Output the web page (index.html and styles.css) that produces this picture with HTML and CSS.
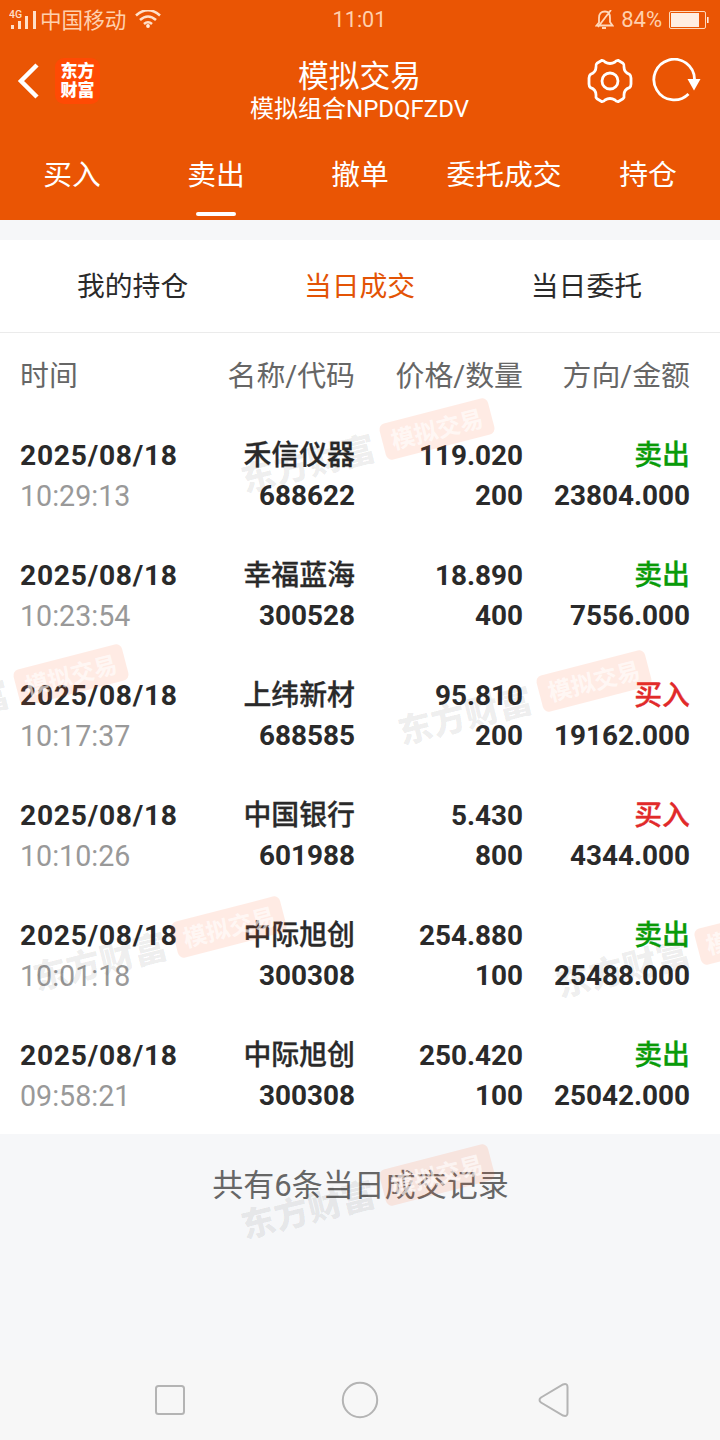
FILE: index.html
```html
<!DOCTYPE html>
<html lang="zh-CN">
<head>
    <meta charset="UTF-8">
    <meta name="viewport" content="width=device-width, initial-scale=1.0">
    <title>模拟交易</title>
    <link rel="stylesheet" href="styles.css">
</head>
<body>
    <div class="app">
        <header class="header">
            <div class="status-bar">
                <div class="status-left">
                    <svg class="signal" width="29" height="22" viewBox="0 0 29 22">
                        <text x="0" y="8.5">4G</text>
                        <path d="M3.5 16v4M10.5 12v8M17.5 7v13M25.5 2v18"/>
                    </svg>
                    <span class="carrier">中国移动</span>
                    <svg class="wifi" width="26" height="20" viewBox="0 0 26 20">
                        <path d="M1 5.5Q13 -5 25 5.5M5 10Q13 3 21 10M9 14Q13 10.5 17 14"/>
                        <circle cx="13" cy="16" r="1.9"/>
                    </svg>
                </div>
                <span class="clock">11:01</span>
                <div class="status-right">
                    <svg class="bell" width="19" height="20" viewBox="0 0 19 20">
                        <path d="M4 13V8Q4 1.500 10 1.500Q15 1.500 15 8V12L17.500 15.500H1.500L4 12.500M7 18H11M16 0L3 17"/>
                    </svg>
                    <span>84%</span>
                    <svg class="battery" width="40" height="18" viewBox="0 0 40 18">
                        <rect class="case" x=".5" y=".5" width="36" height="17" rx="1.5"/>
                        <rect class="level" x="2" y="2" width="28" height="14"/>
                        <rect class="level" x="38" y="6" width="1.6" height="6"/>
                    </svg>
                </div>
            </div>
            <div class="title-bar">
                <div class="title-left">
                    <svg class="back" width="24" height="38" viewBox="0 0 24 38">
                        <path d="M20 3L4 19L20 35"/>
                    </svg>
                    <div class="logo"><span>东方</span><span>财富</span></div>
                </div>
                <div class="title">
                    <h1>模拟交易</h1>
                    <p>模拟组合NPDQFZDV</p>
                </div>
                <div class="title-right">
                    <svg class="icon" width="46" height="46" viewBox="0 0 46 46">
                        <path d="M15 2.300Q17 2.500 18 4Q23 7 28 4Q29 2.500 31 2.300L36 5.200Q37.500 6.500 37 9Q37 14.500 42.500 16.300Q44 17.500 44 20V26Q44 28.500 42.500 29.700Q37 31.500 37 37Q37.500 39.500 36 40.800L31 43.700Q29 43.500 28 42Q23 39 18 42Q17 43.500 15 43.700L10 40.800Q8.500 39.500 9 37Q9 31.500 3.500 29.700Q2 28.500 2 26V20Q2 17.500 3.500 16.300Q9 14.500 9 9Q8.500 6.500 10 5.200Z"/>
                        <circle cx="23" cy="23" r="8"/>
                    </svg>
                    <svg class="icon" width="50" height="46" viewBox="0 0 50 46">
                        <path d="M42.500 21A20.300 20.300 0 1 0 36.500 36"/>
                        <path class="arrow" d="M35.500 21H48.500L42 32.500Z"/>
                    </svg>
                </div>
            </div>
            <nav class="tabs">
                <a>买入</a>
                <a class="active">卖出</a>
                <a>撤单</a>
                <a>委托成交</a>
                <a>持仓</a>
            </nav>
        </header>

        <nav class="sub-tabs">
            <a>我的持仓</a>
            <a class="active">当日成交</a>
            <a>当日委托</a>
        </nav>

        <main class="records">
            <div class="row head">
                <span>时间</span>
                <span>名称/代码</span>
                <span>价格/数量</span>
                <span>方向/金额</span>
            </div>
            <div class="row">
                <div class="date">2025/08/18<small>10:29:13</small></div>
                <div><span class="name">禾信仪器</span><br>688622</div>
                <div>119.020<br>200</div>
                <div><span class="sell">卖出</span><br>23804.000</div>
            </div>
            <div class="row">
                <div class="date">2025/08/18<small>10:23:54</small></div>
                <div><span class="name">幸福蓝海</span><br>300528</div>
                <div>18.890<br>400</div>
                <div><span class="sell">卖出</span><br>7556.000</div>
            </div>
            <div class="row">
                <div class="date">2025/08/18<small>10:17:37</small></div>
                <div><span class="name">上纬新材</span><br>688585</div>
                <div>95.810<br>200</div>
                <div><span class="buy">买入</span><br>19162.000</div>
            </div>
            <div class="row">
                <div class="date">2025/08/18<small>10:10:26</small></div>
                <div><span class="name">中国银行</span><br>601988</div>
                <div>5.430<br>800</div>
                <div><span class="buy">买入</span><br>4344.000</div>
            </div>
            <div class="row">
                <div class="date">2025/08/18<small>10:01:18</small></div>
                <div><span class="name">中际旭创</span><br>300308</div>
                <div>254.880<br>100</div>
                <div><span class="sell">卖出</span><br>25488.000</div>
            </div>
            <div class="row">
                <div class="date">2025/08/18<small>09:58:21</small></div>
                <div><span class="name">中际旭创</span><br>300308</div>
                <div>250.420<br>100</div>
                <div><span class="sell">卖出</span><br>25042.000</div>
            </div>
        </main>

        <p class="total">共有6条当日成交记录</p>

        <footer class="nav-bar">
            <svg width="32" height="32" viewBox="0 0 32 32"><rect x="2" y="2" width="28" height="28" rx="2.500"/></svg>
            <svg class="home" width="38" height="38" viewBox="0 0 38 38"><circle cx="19" cy="19" r="17.200"/></svg>
            <svg width="32" height="36" viewBox="0 0 32 36"><path d="M3 15.500L25 2.500Q29.500 1 29.500 5V31Q29.500 35 25 33.500L3 20.500Q0 18 3 15.500Z"/></svg>
        </footer>

        <!-- watermark, lies over the whole page -->
        <svg class="watermark" width="720" height="1440" viewBox="0 0 720 1440">
            <defs>
                <g id="mark">
                    <text class="wm-name" x="-202" y="15" textLength="137" transform="rotate(-14)">东方财富</text>
                    <g transform="rotate(-14.500)">
                        <rect x="-56" y="-18.500" width="112" height="37" rx="6"/>
                        <text class="wm-tag" x="-47" y="9" textLength="94">模拟交易</text>
                    </g>
                </g>
            </defs>
            <use href="#mark" x="437" y="429"/>
            <use href="#mark" x="71" y="675"/>
            <use href="#mark" x="594" y="681"/>
            <use href="#mark" x="229" y="927"/>
            <use href="#mark" x="752" y="934"/>
            <use href="#mark" x="437" y="1175"/>
        </svg>
    </div>
</body>
</html>
```
FILE: styles.css
```css
* {
    box-sizing: border-box;
}

body {
    margin: 0;
    font-family: Roboto, "Noto Sans CJK SC", sans-serif;
    background-color: #f6f7f9;
    color: #2a2a2a;
}

h1, p {
    margin: 0;
    font-weight: 400;
}

svg {
    display: block;
    fill: none;
    flex-shrink: 0;
}

.app {
    position: relative;
    width: 720px;
    height: 1440px;
    overflow: hidden;
    display: flex;
    flex-direction: column;
}

.header {
    height: 220px;
    background-color: #ea5504;
    color: #fff;
}

/* status bar */
.status-bar {
    display: grid;
    grid-template-columns: 1fr auto 1fr;
    align-items: center;
    height: 40px;
    padding: 0 11px 0 9px;
    font-size: 22px;
    line-height: 40px;
    color: #ffd0ad;
}

.status-left, .status-right {
    display: flex;
    align-items: center;
    height: 36px;
}

.status-right {
    justify-content: flex-end;
    height: 34px;
    font-size: 22px;
    line-height: 34px;
}

.status-right span {
    margin-top: -1px;
}

.clock {
    padding-left: 1px;
    font-size: 21.600px;
    line-height: 38px;
}

.signal path {
    stroke: #ffdfc8;
    stroke-width: 3;
}

.signal text {
    fill: #ffdfc8;
    font-size: 10.500px;
    font-weight: 500;
}

.carrier {
    margin: 1px 9px 0 2px;
    font-size: 21.600px;
}

.wifi path {
    stroke: #ffe0ca;
    stroke-width: 2.600;
}

.wifi circle, .battery .level {
    fill: #ffede2;
}

.bell {
    margin-right: 7px;
}

.bell path {
    stroke: #ffd8bb;
    stroke-width: 1.800;
}

.battery {
    margin-left: 7px;
}

.battery .case {
    stroke: #ffd8bb;
}

/* title */
.title-bar {
    display: grid;
    grid-template-columns: 1fr auto 1fr;
    height: 90px;
    padding: 0 18px 0 17px;
}

.title-left, .title-right {
    display: flex;
    align-items: center;
    height: 82px;
}

.title-right {
    justify-content: flex-end;
    gap: 19px;
}

.back path {
    stroke: #fff;
    stroke-width: 4.500;
}

.logo {
    display: flex;
    flex-direction: column;
    justify-content: center;
    align-items: center;
    width: 45px;
    height: 46px;
    margin-left: 14px;
    border-radius: 9px;
    background-color: #ff4a04;
    font-size: 17px;
    font-weight: 900;
    line-height: 19px;
}

.title {
    padding-top: 17px;
    text-align: center;
}

.title h1 {
    font-size: 30.800px;
    line-height: 40px;
}

.title p {
    font-size: 24px;
    line-height: 24px;
}

.icon path, .icon circle {
    stroke: #fff;
    stroke-width: 2.800;
    stroke-linejoin: round;
}

.icon .arrow {
    fill: #fff;
    stroke: none;
}

/* tabs */
.tabs {
    display: grid;
    grid-template-columns: repeat(5, 1fr);
    height: 90px;
    font-size: 28.800px;
    line-height: 90px;
    text-align: center;
}

.tabs a {
    display: flex;
    flex-direction: column;
    align-items: center;
    height: 86px;
}

.tabs .active::after {
    content: "";
    width: 40px;
    height: 4px;
    margin-top: -8px;
    border-radius: 2px;
    background-color: #fff;
    flex-shrink: 0;
}

.sub-tabs {
    display: flex;
    justify-content: space-between;
    height: 93px;
    margin-top: 20px;
    padding: 0 78px 0 77px;
    border-bottom: 1px solid #ebebeb;
    background-color: #fff;
    font-size: 27.800px;
    line-height: 94px;
}

.sub-tabs .active {
    color: #e35305;
}

/* records */
.records {
    height: 801px;
    background-color: #fff;
}

.row {
    display: grid;
    grid-template-columns: 190px 145px 168px 167px;
    height: 120px;
    padding: 21px 30px 19px 20px;
    font-size: 27.900px;
    font-weight: 700;
    line-height: 40px;
    text-align: right;
}

.row.head {
    height: 82px;
    padding-top: 23px;
    font-size: 28.900px;
    font-weight: 400;
    color: #666;
}

.row > :first-child {
    text-align: left;
}

.date {
    font-size: 28.200px;
    letter-spacing: .75px;
}

.date small {
    display: block;
    font-size: 28.600px;
    font-weight: 400;
    letter-spacing: 0;
    color: #999;
}

.name, .sell, .buy {
    font-weight: 500;
    -webkit-text-stroke: .3px currentColor;
}

.sell {
    color: #099b09;
}

.buy {
    color: #e12a2a;
}

.total {
    margin-top: 32px;
    padding-left: 1px;
    font-size: 31px;
    line-height: 40px;
    text-align: center;
    color: #666;
}

.nav-bar {
    display: flex;
    justify-content: space-between;
    align-items: center;
    height: 80px;
    margin-top: auto;
    padding: 0 150px 0 154px;
    background-color: #f7f7f7;
}

.nav-bar svg {
    stroke: #b4b4b4;
    stroke-width: 2;
}

.nav-bar .home {
    margin-right: 4px;
}

.watermark {
    position: absolute;
    top: 0;
    left: 0;
    pointer-events: none;
}

.watermark rect {
    fill: #ff5a1e;
    fill-opacity: .12;
}

.wm-name {
    fill: #000;
    fill-opacity: .075;
    font-family: "Noto Sans CJK SC", sans-serif;
    font-size: 34px;
    font-weight: 900;
}

.wm-tag {
    fill: #fff;
    fill-opacity: .65;
    font-size: 23.500px;
    font-weight: 700;
}
```
